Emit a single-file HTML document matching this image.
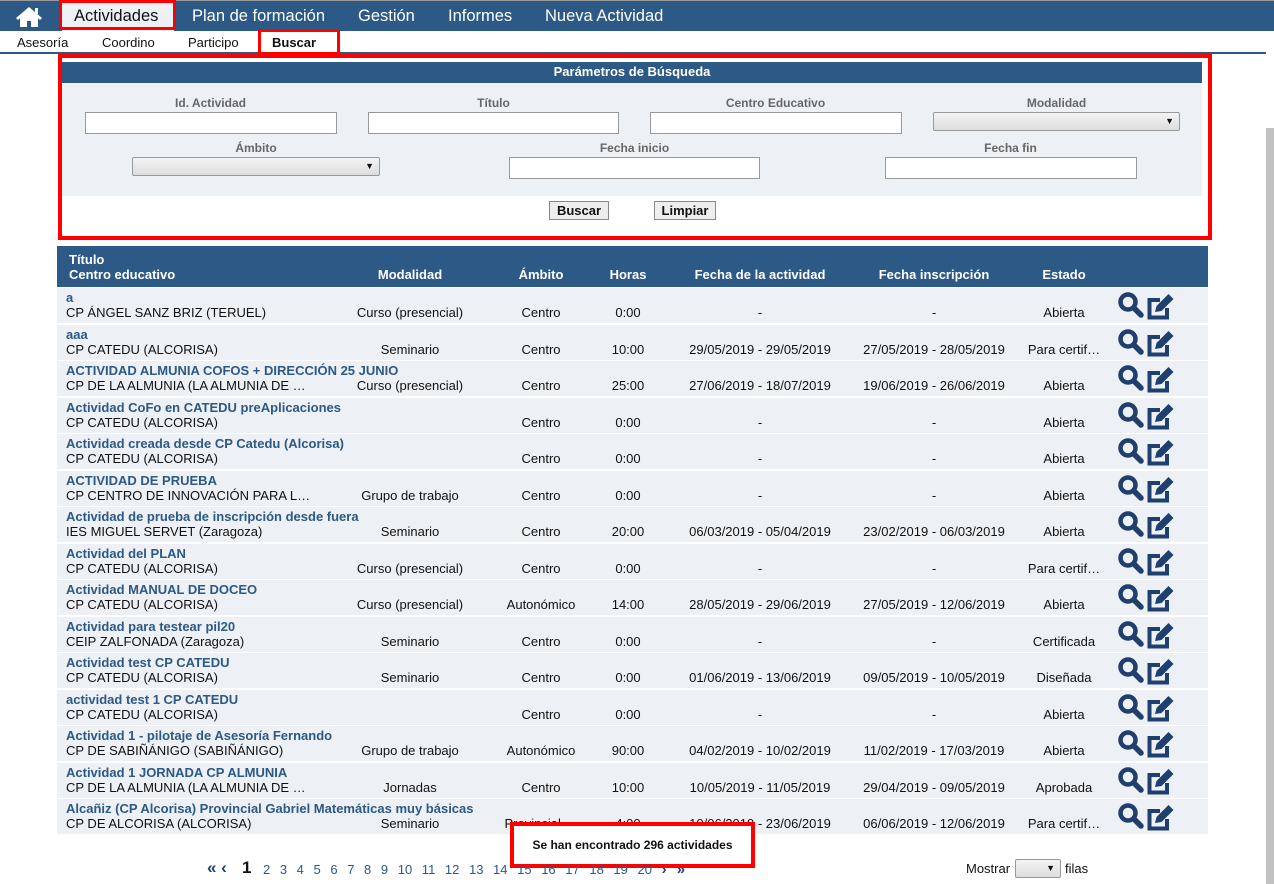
<!DOCTYPE html>
<html><head><meta charset="utf-8"><style>
*{box-sizing:border-box;margin:0;padding:0}
body{width:1274px;height:884px;overflow:hidden;background:#fff;font-family:"Liberation Sans",sans-serif;position:relative;color:#111}
.nav{position:absolute;left:0;top:0;width:1274px;height:31px;background:#2c5985;border-top:1px solid #999}
.nav span{position:absolute;top:6px;color:#fff;font-size:16.5px}
.sub{position:absolute;left:0;top:31px;width:1266px;height:23px;border-bottom:2px solid #2c5985}
.sub span{position:absolute;top:4px;font-size:13px}
.red{position:absolute;border:4px solid #f00}
.panel{position:absolute;left:62px;top:62px;width:1140px;height:134px;background:#edf0f5}
.ph{height:21px;background:#2c5985;color:#fff;font-weight:bold;font-size:13px;text-align:center;line-height:20px}
.lbl{position:absolute;font-size:12px;font-weight:bold;color:#666;text-align:center}
.inp{position:absolute;height:22px;background:#fff;border:1px solid #999}
.sel{position:absolute;height:19px;background:linear-gradient(#f4f4f4,#ddd);border:1px solid #999;border-radius:2px;font-size:9px;text-align:right;padding-right:5px;line-height:17px}
.btn{position:absolute;top:201px;height:19px;border:1px solid #888;background:#eee;font-size:13px;font-weight:bold;text-align:center;line-height:17px}
.th{position:absolute;left:57px;top:246px;width:1151px;height:41px;background:#2c5985;color:#fff;font-weight:bold;font-size:13px}
.th span{position:absolute}
.row{position:absolute;left:57px;width:1151px;height:35px;background:#edf0f5;font-size:13px}
.row span{position:absolute;top:17px;white-space:nowrap}
.row .t{top:2px;left:9px;color:#2c5985;font-weight:bold}
.c{transform:translateX(-50%)}
.ic{position:absolute;left:1060px;top:3px}
.pg{position:absolute;top:861px;font-size:13px;color:#2c5985}
.sb{position:absolute;left:1266px;top:128px;width:8px;height:756px;background:#c1c1c1}
</style></head><body>
<div class="nav">
<svg style="position:absolute;left:15px;top:5px" width="28" height="22" viewBox="0 0 28 22"><path d="M14 1L1 12l2 2 2-1.7V21h7v-6h4v6h7v-8.7l2 1.7 2-2z" fill="#fff"/><rect x="20" y="2" width="3" height="6" fill="#fff"/></svg>
<div style="position:absolute;left:62px;top:1px;width:112px;height:29px;background:#edf0f5"></div>
<span style="left:74px;color:#111">Actividades</span>
<span style="left:192px">Plan de formación</span>
<span style="left:358px">Gestión</span>
<span style="left:448px">Informes</span>
<span style="left:545px">Nueva Actividad</span>
</div>
<div class="red" style="left:59px;top:0;width:117px;height:30px;border-width:3px"></div>
<div class="sub"><span style="left:17px">Asesoría</span><span style="left:102px">Coordino</span><span style="left:188px">Participo</span><span style="left:272px;font-weight:bold">Buscar</span></div>
<div class="red" style="left:258px;top:29px;width:82px;height:26px;border-width:3px"></div>
<div class="sb"></div>
<div class="panel"><div class="ph">Parámetros de Búsqueda</div></div>
<div class="lbl" style="left:85px;top:96px;width:251px">Id. Actividad</div>
<div class="lbl" style="left:368px;top:96px;width:251px">Título</div>
<div class="lbl" style="left:650px;top:96px;width:251px">Centro Educativo</div>
<div class="lbl" style="left:933px;top:96px;width:247px">Modalidad</div>
<div class="inp" style="left:85px;top:112px;width:252px"></div>
<div class="inp" style="left:368px;top:112px;width:251px"></div>
<div class="inp" style="left:650px;top:112px;width:252px"></div>
<div class="sel" style="left:933px;top:112px;width:247px">▼</div>
<div class="lbl" style="left:132px;top:141px;width:248px">Ámbito</div>
<div class="lbl" style="left:509px;top:141px;width:251px">Fecha inicio</div>
<div class="lbl" style="left:885px;top:141px;width:251px">Fecha fin</div>
<div class="sel" style="left:132px;top:157px;width:248px">▼</div>
<div class="inp" style="left:509px;top:157px;width:251px"></div>
<div class="inp" style="left:885px;top:157px;width:252px"></div>
<div class="btn" style="left:549px;width:60px">Buscar</div>
<div class="btn" style="left:654px;width:62px">Limpiar</div>
<div class="red" style="left:58px;top:54px;width:1154px;height:186px"></div>
<div class="th"><span style="left:12px;top:6px">Título</span><span style="left:12px;top:21px">Centro educativo</span>
<span class="c" style="left:353px;top:21px">Modalidad</span><span class="c" style="left:484px;top:21px">Ámbito</span><span class="c" style="left:571px;top:21px">Horas</span><span class="c" style="left:703px;top:21px">Fecha de la actividad</span><span class="c" style="left:877px;top:21px">Fecha inscripción</span><span class="c" style="left:1007px;top:21px">Estado</span></div>
<div id="rows"></div>
<div class="red" style="left:510px;top:822px;width:245px;height:46px;background:#fff"></div>
<div style="position:absolute;left:510px;top:838px;width:245px;text-align:center;font-size:12px;font-weight:bold">Se han encontrado 296 actividades</div>
<div class="pg" style="left:207px;color:#1f3f6e;font-weight:bold;font-size:17px;top:858px">« ‹</div>
<div class="pg" style="left:242px;font-size:17px;font-weight:bold;top:858px;color:#111">1</div>
<div class="pg" style="left:263px;word-spacing:6px">2 3 4 5 6 7 8 9 10 11 12 13 14 15 16 17 18 19 20 <b style="font-size:15px;color:#1f3f6e">› »</b></div>
<div style="position:absolute;left:966px;top:861px;font-size:13px">Mostrar</div>
<div class="sel" style="left:1015px;top:859px;width:46px">▼</div>
<div style="position:absolute;left:1065px;top:861px;font-size:13px">filas</div>
<script>
var d=[["a","CP ÁNGEL SANZ BRIZ (TERUEL)","Curso (presencial)","Centro","0:00","-","-","Abierta"],
["aaa","CP CATEDU (ALCORISA)","Seminario","Centro","10:00","29/05/2019 - 29/05/2019","27/05/2019 - 28/05/2019","Para certif…"],
["ACTIVIDAD ALMUNIA COFOS + DIRECCIÓN 25 JUNIO","CP DE LA ALMUNIA (LA ALMUNIA DE …","Curso (presencial)","Centro","25:00","27/06/2019 - 18/07/2019","19/06/2019 - 26/06/2019","Abierta"],
["Actividad CoFo en CATEDU preAplicaciones","CP CATEDU (ALCORISA)","","Centro","0:00","-","-","Abierta"],
["Actividad creada desde CP Catedu (Alcorisa)","CP CATEDU (ALCORISA)","","Centro","0:00","-","-","Abierta"],
["ACTIVIDAD DE PRUEBA","CP CENTRO DE INNOVACIÓN PARA L…","Grupo de trabajo","Centro","0:00","-","-","Abierta"],
["Actividad de prueba de inscripción desde fuera","IES MIGUEL SERVET (Zaragoza)","Seminario","Centro","20:00","06/03/2019 - 05/04/2019","23/02/2019 - 06/03/2019","Abierta"],
["Actividad del PLAN","CP CATEDU (ALCORISA)","Curso (presencial)","Centro","0:00","-","-","Para certif…"],
["Actividad MANUAL DE DOCEO","CP CATEDU (ALCORISA)","Curso (presencial)","Autonómico","14:00","28/05/2019 - 29/06/2019","27/05/2019 - 12/06/2019","Abierta"],
["Actividad para testear pil20","CEIP ZALFONADA (Zaragoza)","Seminario","Centro","0:00","-","-","Certificada"],
["Actividad test CP CATEDU","CP CATEDU (ALCORISA)","Seminario","Centro","0:00","01/06/2019 - 13/06/2019","09/05/2019 - 10/05/2019","Diseñada"],
["actividad test 1 CP CATEDU","CP CATEDU (ALCORISA)","","Centro","0:00","-","-","Abierta"],
["Actividad 1 - pilotaje de Asesoría Fernando","CP DE SABIÑÁNIGO (SABIÑÁNIGO)","Grupo de trabajo","Autonómico","90:00","04/02/2019 - 10/02/2019","11/02/2019 - 17/03/2019","Abierta"],
["Actividad 1 JORNADA CP ALMUNIA","CP DE LA ALMUNIA (LA ALMUNIA DE …","Jornadas","Centro","10:00","10/05/2019 - 11/05/2019","29/04/2019 - 09/05/2019","Aprobada"],
["Alcañiz (CP Alcorisa) Provincial Gabriel Matemáticas muy básicas","CP DE ALCORISA (ALCORISA)","Seminario","Provincial …","4:00","10/06/2019 - 23/06/2019","06/06/2019 - 12/06/2019","Para certif…"]];
var ic='<svg class="ic" width="62" height="30" viewBox="0 0 62 30"><circle cx="11" cy="11" r="7.5" fill="none" stroke="#1f3f6e" stroke-width="4.5"/><path d="M17 17l7 7" stroke="#1f3f6e" stroke-width="5.5" stroke-linecap="round"/><path d="M43 9H32.5v17.5h17.5V17" fill="none" stroke="#1f3f6e" stroke-width="4"/><path d="M38 21l1.5-6 12-12 5 5-12 12z" fill="#1f3f6e"/></svg>';
var h='';d.forEach(function(r,i){var y=288+i*36.5;h+='<div class="row" style="top:'+y+'px"><span class="t">'+r[0]+'</span><span style="left:9px">'+r[1]+'</span><span class="c" style="left:353px">'+r[2]+'</span><span class="c" style="left:484px">'+r[3]+'</span><span class="c" style="left:571px">'+r[4]+'</span><span class="c" style="left:703px">'+r[5]+'</span><span class="c" style="left:877px">'+r[6]+'</span><span class="c" style="left:1007px">'+r[7]+'</span>'+ic+'</div>'});
document.getElementById('rows').innerHTML=h;
</script>
</body></html>
